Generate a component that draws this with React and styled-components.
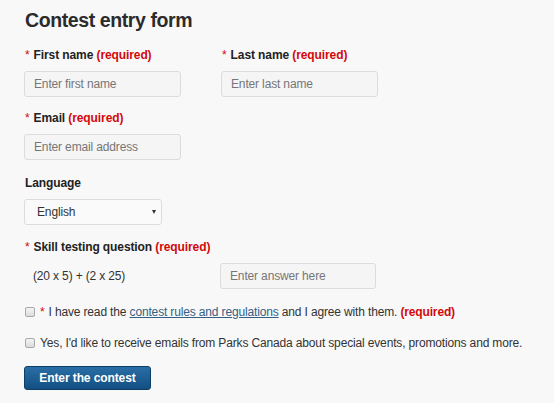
import React from 'react';
import { styled, createGlobalStyle } from 'styled-components';

const Global = createGlobalStyle`
  html, body {
    margin: 0;
    padding: 0;
    background: #f8f8f8;
  }
  * { box-sizing: border-box; }
`;

const Root = styled.form`
  font-family: "Liberation Sans", Arial, sans-serif;
  color: #333;
  padding: 8px 24px 12px 24px;
  display: flex;
  flex-direction: column;
`;

const Title = styled.h2`
  margin: 0 0 14px 1px;
  font-size: 19.5px;
  line-height: 24px;
  font-weight: 700;
  letter-spacing: -0.4px;
  color: #2b2b2b;
`;

const Row = styled.div`
  display: grid;
  grid-template-columns: ${p => p.$cols || '157px 157px'};
  column-gap: ${p => p.$gap || '40px'};
  margin-bottom: ${p => p.$mb || '12px'};
  align-items: center;
`;

const Field = styled.div`
  display: flex;
  flex-direction: column;
`;

const Label = styled.label`
  font-size: 12px;
  line-height: 18px;
  font-weight: 700;
  letter-spacing: -0.1px;
  margin: 0 0 7px 1px;
  color: #222;
`;

const Star = styled.span`
  color: #d3080c;
  font-weight: 400;
  margin-right: 4px;
`;

const Req = styled.strong`
  color: #d3080c;
  font-weight: 700;
`;

const Input = styled.input`
  height: 26px;
  width: ${p => p.$w || '157px'};
  border: 1px solid #dcdcdc;
  border-radius: 3px;
  background: #f5f5f5;
  padding: 0 9px;
  font-family: inherit;
  font-size: 12px;
  letter-spacing: -0.15px;
  color: #333;
  &::placeholder { color: #767676; }
`;

const SelectBox = styled.div`
  width: 138px;
  height: 26px;
  border: 1px solid #dcdcdc;
  border-radius: 3px;
  background: #fafafa;
  display: flex;
  align-items: center;
  padding: 0 5px 0 12px;
  font-size: 12px;
  letter-spacing: -0.15px;
  color: #333;
`;

const Caret = styled.span`
  margin-left: auto;
  width: 0;
  height: 0;
  border-left: 2.5px solid transparent;
  border-right: 2.5px solid transparent;
  border-top: 4px solid #333;
`;

const Question = styled.div`
  font-size: 12px;
  letter-spacing: -0.15px;
  padding-left: 9px;
  color: #333;
`;

const CheckRow = styled.label`
  display: flex;
  align-items: center;
  gap: 5px;
  font-size: 12px;
  letter-spacing: -0.15px;
  line-height: 18px;
  color: #333;
  margin-bottom: ${p => p.$mb || '13px'};
  padding-left: 1px;
  white-space: nowrap;
`;

const Box = styled.span`
  width: 10px;
  height: 10px;
  border: 1px solid #a9a9a9;
  border-radius: 2px;
  background: linear-gradient(#f4f4f4, #dcdcdc);
  flex-shrink: 0;
`;

const Link = styled.a`
  color: #335f85;
  text-decoration: underline;
`;

const Button = styled.button`
  align-self: flex-start;
  width: 127px;
  height: 24px;
  border: 1px solid #0d3f66;
  border-radius: 3px;
  background: linear-gradient(#2a6ea6, #114f82);
  color: #fff;
  font-family: inherit;
  font-size: 12px;
  font-weight: 700;
  letter-spacing: -0.1px;
  padding: 0;
`;

export default function App() {
  return (
    <>
      <Global />
      <Root onSubmit={e => e.preventDefault()}>
        <Title>Contest entry form</Title>
        <Row>
          <Field>
            <Label><Star>*</Star>First name <Req>(required)</Req></Label>
            <Input placeholder="Enter first name" />
          </Field>
          <Field>
            <Label><Star>*</Star>Last name <Req>(required)</Req></Label>
            <Input placeholder="Enter last name" />
          </Field>
        </Row>
        <Row $mb="14px">
          <Field>
            <Label><Star>*</Star>Email <Req>(required)</Req></Label>
            <Input placeholder="Enter email address" />
          </Field>
        </Row>
        <Row $mb="13px">
          <Field>
            <Label>Language</Label>
            <SelectBox>English<Caret /></SelectBox>
          </Field>
        </Row>
        <Field>
          <Label><Star>*</Star>Skill testing question <Req>(required)</Req></Label>
        </Field>
        <Row $cols="196px 156px" $gap="0px" $mb="14px">
          <Question>(20 x 5) + (2 x 25)</Question>
          <Input $w="156px" placeholder="Enter answer here" />
        </Row>
        <CheckRow>
          <Box />
          <span><Star>*</Star>I have read the <Link href="#">contest rules and regulations</Link> and I agree with them. <Req>(required)</Req></span>
        </CheckRow>
        <CheckRow $mb="14px">
          <Box />
          <span>Yes, I'd like to receive emails from Parks Canada about special events, promotions and more.</span>
        </CheckRow>
        <Button type="submit">Enter the contest</Button>
      </Root>
    </>
  );
}
